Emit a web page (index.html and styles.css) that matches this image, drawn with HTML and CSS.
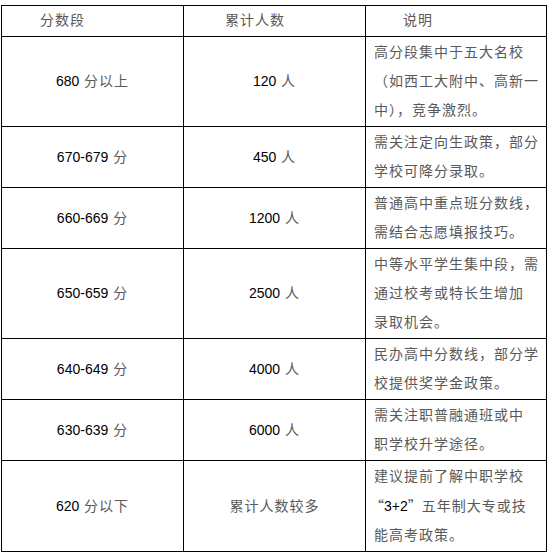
FILE: index.html
```html
<!DOCTYPE html>
<html lang="zh-CN">
<head>
<meta charset="utf-8">
<title>分数段统计</title>
<link rel="stylesheet" href="styles.css">
</head>
<body>
<table class="score-table">
  <colgroup>
    <col class="c1">
    <col class="c2">
    <col class="c3">
  </colgroup>
  <thead>
    <tr>
      <th class="h1">分数段</th>
      <th class="h2">累计人数</th>
      <th class="h3">说明</th>
    </tr>
  </thead>
  <tbody>
    <tr>
      <td class="center"><span class="num">680</span> 分以上</td>
      <td class="center"><span class="num">120</span> 人</td>
      <td class="note">高分段集中于五大名校<br>（如西工大附中、高新一<br>中），竞争激烈。</td>
    </tr>
    <tr>
      <td class="center"><span class="num">670-679</span> 分</td>
      <td class="center"><span class="num">450</span> 人</td>
      <td class="note">需关注定向生政策，部分<br>学校可降分录取。</td>
    </tr>
    <tr>
      <td class="center"><span class="num">660-669</span> 分</td>
      <td class="center"><span class="num">1200</span> 人</td>
      <td class="note">普通高中重点班分数线，<br>需结合志愿填报技巧。</td>
    </tr>
    <tr>
      <td class="center"><span class="num">650-659</span> 分</td>
      <td class="center"><span class="num">2500</span> 人</td>
      <td class="note">中等水平学生集中段，需<br>通过校考或特长生增加<br>录取机会。</td>
    </tr>
    <tr>
      <td class="center"><span class="num">640-649</span> 分</td>
      <td class="center"><span class="num">4000</span> 人</td>
      <td class="note">民办高中分数线，部分学<br>校提供奖学金政策。</td>
    </tr>
    <tr>
      <td class="center"><span class="num">630-639</span> 分</td>
      <td class="center"><span class="num">6000</span> 人</td>
      <td class="note">需关注职普融通班或中<br>职学校升学途径。</td>
    </tr>
    <tr>
      <td class="center"><span class="num">620</span> 分以下</td>
      <td class="center">累计人数较多</td>
      <td class="note">建议提前了解中职学校<br><span class="q q-open">“</span><span class="num">3+2</span><span class="q q-close">”</span>五年制大专或技<br>能高考政策。</td>
    </tr>
  </tbody>
</table>
</body>
</html>
```

FILE: styles.css
```css
html, body {
  margin: 0;
  padding: 0;
  background: #ffffff;
}

body {
  font-family: "Liberation Sans", "Noto Sans CJK SC", sans-serif;
  font-size: 14px;
  color: #595959;
}

.score-table {
  border-collapse: collapse;
  table-layout: fixed;
  width: 545px;
  margin: 5px 0 0 1px;
}

.c1 { width: 182px; }
.c2 { width: 182px; }
.c3 { width: 181px; }

.score-table th,
.score-table td {
  border: 1px solid #000;
  line-height: 29px;
  letter-spacing: 1px;
  vertical-align: middle;
  white-space: nowrap;
  overflow: hidden;
  font-weight: normal;
}

.score-table th {
  text-align: left;
  padding: 0 0 1px 0;
}

.h1 { padding-left: 38px !important; }
.h2 { padding-left: 41px !important; }
.h3 { padding-left: 37px !important; }

.score-table td {
  padding: 1px 4px;
}

.center {
  text-align: center;
}

.score-table td.note {
  text-align: left;
  padding: 1px 4px 1px 8px;
}

.num {
  color: #000;
  letter-spacing: 0;
}

.q {
  font-family: "Noto Sans CJK SC", sans-serif;
  color: #444;
}

.q-open {
  margin-left: -4px;
  letter-spacing: 0;
}

.q-close {
  letter-spacing: -4px;
  margin-right: 4px;
}
```
